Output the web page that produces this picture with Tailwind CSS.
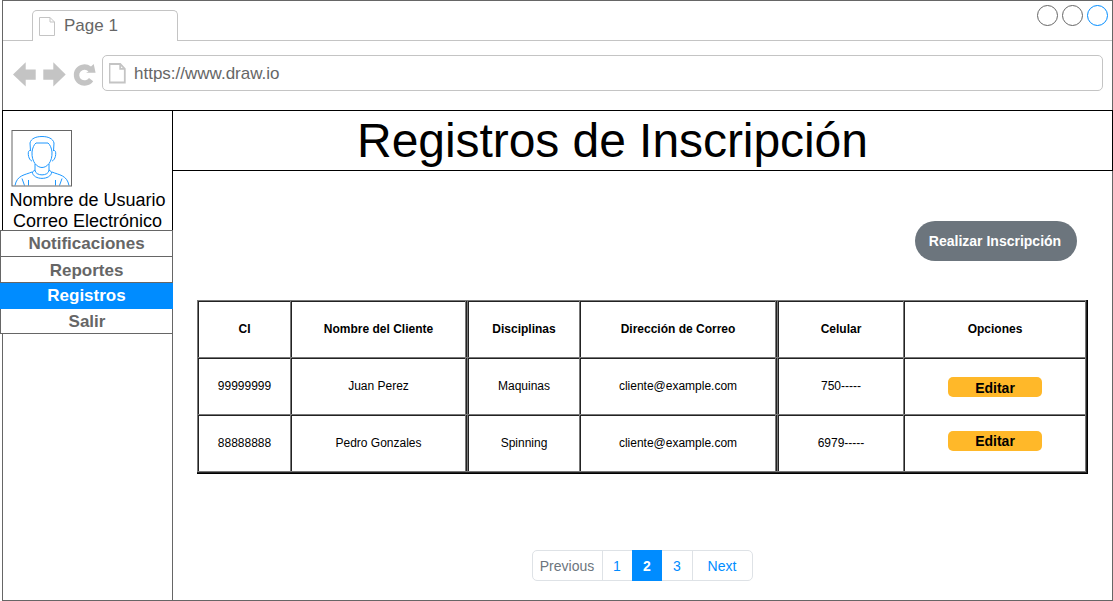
<!DOCTYPE html>
<html lang="es">
<head>
<meta charset="utf-8">
<title>Registros de Inscripción</title>
<script src="https://cdn.jsdelivr.net/npm/@tailwindcss/browser@4"></script>
</head>
<body class="w-[1113px] h-[601px] overflow-hidden bg-white font-['Liberation_Sans',Arial,sans-serif] text-black">
<div class="flex flex-col h-[601px]">
  <!-- Browser chrome -->
  <header class="ml-[2px] h-[110px] flex flex-col border-t border-x border-[#666]">
    <div class="h-10 flex items-end">
      <div class="w-[29px] border-b border-[#c4c4c4]"></div>
      <div class="w-[146px] h-[31px] border border-b-0 border-[#c4c4c4] rounded-t-[5px] flex items-center pl-[6px] gap-[8px] text-[17px] text-[#666]">
        <svg class="w-[18px] h-5 shrink-0 mt-px" viewBox="0 0 18 20" fill="none" stroke="#c4c4c4"><path d="M.5 .5H11L15.500 5V18.500H.5ZM11 .5V5H15.500"/></svg>
        <span class="leading-5 -mt-px -ml-px">Page 1</span>
      </div>
      <div class="flex-1 h-10 border-b border-[#c4c4c4] flex justify-end pr-[4px] pt-[4px]">
        <svg class="w-[72px] h-[22px]" viewBox="0 0 72 22" fill="none" stroke="#666"><circle cx="11.500" cy="10.500" r="10"/><circle cx="36.500" cy="10.500" r="10"/><circle cx="61.500" cy="10.500" r="10" stroke="#008cff"/></svg>
      </div>
    </div>
    <div class="flex pt-[14px] pl-[10px]">
      <svg class="w-[89px] h-9 shrink-0" viewBox="0 0 89 36" fill="#c4c4c4"><path d="M0 19.500 12.700 7.300V14.400H22.700V24.800H12.700V31.500ZM30.300 14.400H40.300V7.300L52.700 19.500 40.300 31.500V24.800H30.300Z"/><path d="M78 11.500 80.700 9 82.600 17.700H73L75.500 16.500A5.300 5.300 0 1 0 76 22.900L80.200 26.200A10.700 10.700 0 1 1 78 11.500Z"/></svg>
      <div class="w-[1001px] h-9 border border-[#c4c4c4] rounded-[5px] flex items-center pl-[6px] gap-[8px] text-[17px] text-[#666]">
        <svg class="w-[18px] h-[22px]" viewBox="0 0 18 22" fill="none" stroke="#c4c4c4" stroke-width="1.800"><path d="M.5 2H11.200L15.800 6.800V20.500H.5ZM11.200 2V6.800H15.800"/></svg>
        <span class="leading-5 mt-px -ml-px">https://www.draw.io</span>
      </div>
    </div>
  </header>
  <div class="flex h-[491px]">
    <!-- Sidebar -->
    <aside class="w-[173px] flex flex-col text-center">
      <div class="ml-[2px] h-[120px] border-t border-x border-black pt-[19px]">
        <svg class="ml-[8px] w-[62px] h-[58px]" viewBox="0 0 62 58" fill="none"><g stroke="#1e98ff"><path d="M19.500 21 19 13C20 8.500 25 6.500 31 6.500S42 8.500 43 13L42.500 21"/><path d="M21 22C21.500 18 23 14.500 25 13H37C39 14.500 40.500 18 41 22C41.500 32 36 37.500 31 37.500S20.500 32 21 22Z"/><path d="M19 20.500C16 20 17 30 21 31M43 20.500C46 20 45 30 41 31"/><path d="M24 34V40C24 46.500 38 46.500 38 40V34M24 40 21.300 42C22 50.500 40 50.500 40.700 42L38 40"/><path d="M21 42C14 45 6 45 4 55.500M41 42C48 45 56 45 58 55.500M11 48.500 13.500 55.500M51 48.500 48.500 55.500M17.500 50V55.500M44.500 50V55.500"/></g><rect x="1" y=".5" width="59.500" height="55.500" stroke="#666"/></svg>
        <div class="text-[18px] leading-[21px] mt-[2px] whitespace-nowrap">Nombre de Usuario<br>Correo Electrónico</div>
      </div>
      <nav class="text-[17px] font-bold text-[#666] leading-[25px]">
        <div class="h-[27px] border border-[#666]">Notificaciones</div>
        <div class="h-[26px] border-x border-b border-[#666] pt-px">Reportes</div>
        <div class="h-[26px] bg-[#008cff] text-white">Registros</div>
        <div class="h-[25px] border-x border-b border-[#666] pl-px">Salir</div>
      </nav>
      <div class="flex-1 ml-[2px] border-x border-b border-[#666]"></div>
    </aside>
    <!-- Content -->
    <main class="flex-1 flex flex-col">
      <h1 class="h-[61px] border-y border-r border-black text-center text-[48px] leading-[59px] tracking-[-0.06px] pr-[60px]">Registros de Inscripción</h1>
      <div class="flex-1 border-r border-b border-[#666] flex flex-col pl-[24px] pt-[49.500px]">
        <button class="ml-[717.500px] w-[162px] h-10 pt-px pr-px rounded-full bg-[#6c757d] text-white text-[14px] font-bold">Realizar Inscripción</button>
        <div class="mt-[39.500px] w-[889px] h-[172px] grid grid-cols-[93px_175px_114px_196px_128px_182px] grid-rows-[57px_57px_57px] text-[12px] text-center leading-[56px] border-r border-b border-[#777] shadow-[1px_1px_0_#222,1px_0_0_#222,2px_0_0_#000,0_1px_0_#222,0_2px_0_#000,2px_2px_0_#000] *:border-[#777] *:border-t *:border-l">
          <div class="font-bold pl-px shadow-[inset_1px_1px_0_#222]">CI</div>
          <div class="font-bold pl-px shadow-[inset_1px_1px_0_#222]">Nombre del Cliente</div>
          <div class="font-bold pl-[3px] shadow-[inset_1px_0_0_#222,inset_2px_0_0_#777,inset_3px_0_0_#222,inset_0_1px_0_#222]">Disciplinas</div>
          <div class="font-bold pl-px shadow-[inset_1px_1px_0_#222]">Dirección de Correo</div>
          <div class="font-bold pl-[3px] shadow-[inset_1px_0_0_#222,inset_2px_0_0_#777,inset_3px_0_0_#222,inset_0_1px_0_#222]">Celular</div>
          <div class="font-bold pl-px shadow-[inset_1px_1px_0_#222]">Opciones</div>

          <div class="pl-px shadow-[inset_1px_1px_0_#222]">99999999</div>
          <div class="pl-px shadow-[inset_1px_1px_0_#222]">Juan Perez</div>
          <div class="pl-[3px] shadow-[inset_1px_0_0_#222,inset_2px_0_0_#777,inset_3px_0_0_#222,inset_0_1px_0_#222]">Maquinas</div>
          <div class="pl-px shadow-[inset_1px_1px_0_#222]">cliente@example.com</div>
          <div class="pl-[3px] shadow-[inset_1px_0_0_#222,inset_2px_0_0_#777,inset_3px_0_0_#222,inset_0_1px_0_#222]">750-----</div>
          <div class="flex justify-center pt-[19px] pl-px shadow-[inset_1px_1px_0_#222]"><button class="w-[94px] h-5 rounded-[5px] bg-[#ffb829] text-[14px] leading-[20px] pt-px font-bold">Editar</button></div>

          <div class="pl-px shadow-[inset_1px_1px_0_#222]">88888888</div>
          <div class="pl-px shadow-[inset_1px_1px_0_#222]">Pedro Gonzales</div>
          <div class="pl-[3px] shadow-[inset_1px_0_0_#222,inset_2px_0_0_#777,inset_3px_0_0_#222,inset_0_1px_0_#222]">Spinning</div>
          <div class="pl-px shadow-[inset_1px_1px_0_#222]">cliente@example.com</div>
          <div class="pl-[3px] shadow-[inset_1px_0_0_#222,inset_2px_0_0_#777,inset_3px_0_0_#222,inset_0_1px_0_#222]">6979-----</div>
          <div class="flex justify-center pt-[15.500px] pl-px shadow-[inset_1px_1px_0_#222]"><button class="w-[94px] h-5 rounded-[5px] bg-[#ffb829] text-[14px] leading-[20px] font-bold">Editar</button></div>
        </div>
        <div class="mt-[78px] ml-[335px] w-[221px] h-[31px] flex border border-[#dee2e6] rounded-[5px] text-[14px] leading-[30px] text-center text-[#008cff]">
          <span class="w-[70px] pr-px border-r border-[#dee2e6] text-[#6c757d]">Previous</span><span class="w-[29px] pr-px">1</span><span class="w-[30px] -my-px bg-[#008cff] text-white font-bold leading-8">2</span><span class="w-[31px] border-r border-[#dee2e6]">3</span><span class="flex-1 pr-px">Next</span>
        </div>
      </div>
    </main>
  </div>
</div>
</body>
</html>
